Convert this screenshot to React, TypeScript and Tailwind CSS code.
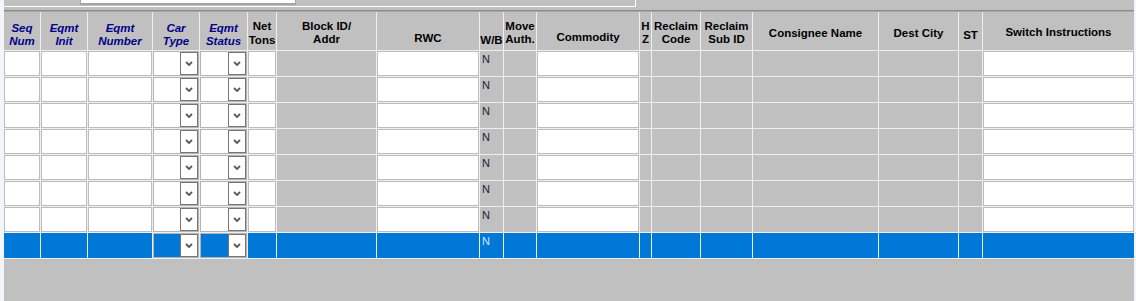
type Kind = "input" | "select" | "grey" | "flag";

type Column = {
  lines: string[];
  italic?: boolean;
  pt: string;
  leading?: string;
  kind: Kind;
};

const columns: Column[] = [
  { lines: ["Seq", "Num"], italic: true, pt: "pt-[10px]", kind: "input" },
  { lines: ["Eqmt", "Init"], italic: true, pt: "pt-[10px]", kind: "input" },
  { lines: ["Eqmt", "Number"], italic: true, pt: "pt-[10px]", kind: "input" },
  { lines: ["Car", "Type"], italic: true, pt: "pt-[10px]", kind: "select" },
  { lines: ["Eqmt", "Status"], italic: true, pt: "pt-[10px]", kind: "select" },
  { lines: ["Net", "Tons"], pt: "pt-[7px]", leading: "leading-[14px]", kind: "input" },
  { lines: ["Block ID/", "Addr"], pt: "pt-[8px]", kind: "grey" },
  { lines: ["RWC"], pt: "pt-[20px]", kind: "input" },
  { lines: ["W/B"], pt: "pt-[22px]", kind: "flag" },
  { lines: ["Move", "Auth."], pt: "pt-[8px]", kind: "grey" },
  { lines: ["Commodity"], pt: "pt-[19px]", kind: "input" },
  { lines: ["H", "Z"], pt: "pt-[8px]", kind: "grey" },
  { lines: ["Reclaim", "Code"], pt: "pt-[8px]", kind: "grey" },
  { lines: ["Reclaim", "Sub ID"], pt: "pt-[8px]", kind: "grey" },
  { lines: ["Consignee Name"], pt: "pt-[15px]", kind: "grey" },
  { lines: ["Dest City"], pt: "pt-[15px]", kind: "grey" },
  { lines: ["ST"], pt: "pt-[17px]", kind: "grey" },
  { lines: ["Switch Instructions"], pt: "pt-[14px]", kind: "input" },
];

const gridCols =
  "grid grid-cols-[36px_47px_65px_47px_48px_29px_100px_103px_24px_33px_103px_12px_49px_52px_126px_80px_24px_152px]";

const rowCount = 8;

function Chevron() {
  return (
    <svg width="8" height="5" viewBox="0 0 8 5" className="block">
      <polyline
        points="1,1 4,4 7,1"
        fill="none"
        stroke="#5a5a5a"
        strokeWidth="1.8"
      />
    </svg>
  );
}

function Cell({ col, index, selected }: { col: Column; index: number; selected: boolean }) {
  const line = index === 0 ? "" : "border-l border-[#efefef]";

  if (col.kind === "select") {
    return (
      <div className={`${line} h-[25px] bg-[#b4b4b4] p-px`}>
        <div className="flex h-full">
          <div className={selected ? "flex-1 bg-[#0078d7]" : "flex-1 bg-white"} />
          <div className="flex w-[18px] items-center justify-center border border-[#767676] bg-white">
            <Chevron />
          </div>
        </div>
      </div>
    );
  }

  if (selected) {
    return (
      <div className={`${line} h-[25px] bg-[#0078d7]`}>
        {col.kind === "flag" ? (
          <span className="block pl-[2px] pt-[2px] text-[11px] leading-[12px] text-[#cfe6ff]">N</span>
        ) : null}
      </div>
    );
  }

  if (col.kind === "input") {
    return (
      <div className={`${line} h-[25px] bg-[#bcbcbc] p-px`}>
        <div className="h-full bg-white" />
      </div>
    );
  }

  return (
    <div className={`${line} h-[25px] bg-[#c0c0c0]`}>
      {col.kind === "flag" ? (
        <span className="block pl-[2px] pt-[2px] text-[11px] leading-[12px] text-[#2b1838]">N</span>
      ) : null}
    </div>
  );
}

export default function App() {
  return (
    <div className="h-[301px] w-[1136px] overflow-hidden bg-[#f2f5fa] pl-[4px] font-['Liberation_Sans',Arial,sans-serif]">
      <div className="h-[301px] w-[1130px] bg-[#c0c0c0]">
        <div className="h-[7px] w-[632px] border-b border-r border-white">
          <div className="ml-[76px] h-[5px] w-[216px] border-x border-b-2 border-[#a4a4a4] bg-white" />
        </div>
        <div className="mt-[3px] h-px bg-[#8a8a8a]" />
        <div className="h-px bg-[#a9a9a9]" />

        <div className={gridCols}>
          {columns.map((col, i) => (
            <div
              key={i}
              className={`${i === 0 ? "" : "border-l border-[#efefef]"} h-[38px] ${col.pt} flex flex-col items-center whitespace-nowrap text-center font-bold ${
                col.italic ? "text-[11.5px] italic text-[#000088]" : "text-[11.5px] text-black"
              } ${col.leading ?? "leading-[13px]"}`}
            >
              {col.lines.map((l) => (
                <span key={l}>{l}</span>
              ))}
            </div>
          ))}
        </div>

        {Array.from({ length: rowCount }).map((_, r) => (
          <div
            key={r}
            className={`${gridCols} border-t border-[#efefef] ${r === rowCount - 1 ? "border-b" : ""}`}
          >
            {columns.map((col, i) => (
              <Cell key={i} col={col} index={i} selected={r === rowCount - 1} />
            ))}
          </div>
        ))}
      </div>
    </div>
  );
}
